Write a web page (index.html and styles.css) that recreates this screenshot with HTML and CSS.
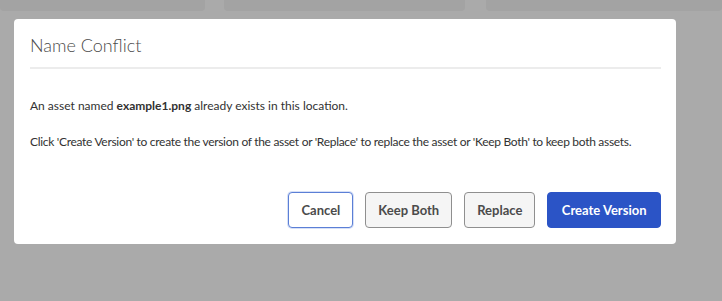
FILE: index.html
```html
<!DOCTYPE html>
<html lang="en">
<head>
    <meta charset="UTF-8">
    <meta name="viewport" content="width=device-width, initial-scale=1.0">
    <title>Name Conflict</title>
    <link rel="stylesheet" href="styles.css">
</head>
<body>
    <div class="backdrop-cards">
        <div class="card card-a"></div>
        <div class="card card-b"></div>
        <div class="card card-c"></div>
    </div>

    <div class="dialog" role="dialog" aria-labelledby="dialogTitle">
        <div class="dialog-header">
            <h2 id="dialogTitle">Name Conflict</h2>
        </div>

        <div class="dialog-body">
            <p>An asset named <strong>example1.png</strong> already exists in this location.</p>
            <p class="hint">Click 'Create Version' to create the version of the asset or 'Replace' to replace the asset or 'Keep Both' to keep both assets.</p>
        </div>

        <div class="dialog-footer">
            <button class="btn btn-focus">Cancel</button>
            <button class="btn">Keep Both</button>
            <button class="btn">Replace</button>
            <button class="btn btn-cta">Create Version</button>
        </div>
    </div>
</body>
</html>
```

FILE: styles.css
```css
:root {
    --overlay: #aaaaaa;
    --card: #a3a3a3;
    --text: #323232;
    --title: #4b4b4b;
    --cta: #2b54c6;
}

* {
    box-sizing: border-box;
}

body {
    margin: 0;
    background: var(--overlay);
    font-family: Lato, 'Open Sans', sans-serif;
    height: 301px;
    overflow: hidden;
}

.backdrop-cards {
    display: flex;
    gap: 19px;
    height: 11px;
}

.card {
    background: var(--card);
    border-radius: 0 0 4px 4px;
}

.card-a {
    width: 205px;
}

.card-b {
    width: 241px;
}

.card-c {
    flex: 1;
    margin-left: 2px;
}

.dialog {
    width: 662px;
    margin: 8px 0 0 14px;
    padding: 15px 15px 16px 16px;
    background: #fff;
    border-radius: 4px;
}

.dialog-header {
    border-bottom: 2px solid #ececec;
    padding-bottom: 11px;
}

.dialog-header h2 {
    margin: 0;
    font-size: 18px;
    line-height: 22px;
    font-weight: 300;
    color: var(--title);
}

.dialog-body {
    padding-top: 29px;
    font-size: 12px;
    line-height: 16px;
    color: var(--text);
}

.dialog-body p {
    margin: 0 0 20px;
    white-space: nowrap;
}

.dialog-body .hint {
    letter-spacing: -0.3px;
}

.dialog-body strong {
    font-weight: 700;
}

.dialog-footer {
    display: flex;
    justify-content: flex-end;
    gap: 12px;
    margin-top: 42px;
}

.btn {
    height: 36px;
    padding: 0 12px;
    border: 1px solid #8f8f8f;
    border-radius: 4px;
    background: #f5f5f5;
    color: var(--title);
    font-family: inherit;
    font-size: 13px;
    font-weight: 700;
}

.btn-focus {
    background: #fff;
    border-color: #5b7fd6;
    box-shadow: 0 0 0 1px #d6e0f7;
}

.btn-cta {
    padding: 0 13.5px;
    background: var(--cta);
    border-color: var(--cta);
    color: #fff;
}
```
